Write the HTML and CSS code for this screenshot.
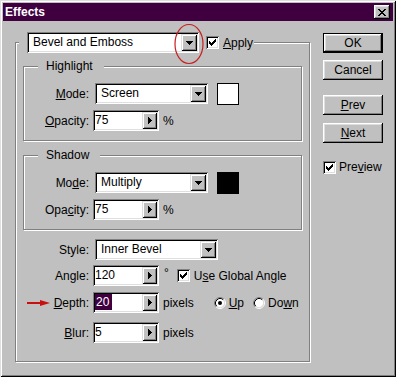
FILE: index.html
```html
<!DOCTYPE html>
<html lang="en">
<head>
    <meta charset="UTF-8">
    <title>Effects</title>
    <link rel="stylesheet" href="styles.css">
</head>
<body>
    <div class="window">
        <div class="titlebar">
            <span class="title">Effects</span>
            <span class="close-btn">
                <svg width="8" height="7" viewBox="0 0 8 7" shape-rendering="crispEdges"><path d="M0 0h2v1H0zM6 0h2v1H6zM1 1h2v1H1zM5 1h2v1H5zM2 2h4v1H2zM3 3h2v1H3zM2 4h4v1H2zM1 5h2v1H1zM5 5h2v1H5zM0 6h2v1H0zM6 6h2v1H6z"/></svg>
            </span>
        </div>

        <div class="dialog-body">
            <div class="main-group">
                <div class="main-header">
                    <div class="combo combo-effect">
                        <span class="combo-text">Bevel and Emboss</span>
                        <span class="combo-btn"><svg width="7" height="4" viewBox="0 0 7 4" shape-rendering="crispEdges"><path d="M0 0h7v1H0zM1 1h5v1H1zM2 2h3v1H2zM3 3h1v1H3z"/></svg></span>
                    </div>
                    <span class="checkbox check-apply"><svg width="7" height="7" viewBox="0 0 7 7" shape-rendering="crispEdges"><path d="M6 0h1v1H6zM5 1h2v1H5zM0 2h1v1H0zM4 2h3v1H4zM0 3h2v1H0zM3 3h3v1H3zM0 4h5v1H0zM1 5h3v1H1zM2 6h1v1H2z"/></svg></span>
                    <span class="check-text"><u>A</u>pply</span>
                </div>

                <div class="group group-highlight">
                    <div class="group-title">Highlight</div>
                    <div class="row row-first">
                        <span class="label"><u>M</u>ode:</span>
                        <div class="combo combo-mode">
                            <span class="combo-text">Screen</span>
                            <span class="combo-btn"><svg width="7" height="4" viewBox="0 0 7 4" shape-rendering="crispEdges"><path d="M0 0h7v1H0zM1 1h5v1H1zM2 2h3v1H2zM3 3h1v1H3z"/></svg></span>
                        </div>
                        <span class="swatch swatch-white"></span>
                    </div>
                    <div class="row row-next">
                        <span class="label"><u>O</u>pacity:</span>
                        <div class="spin">
                            <span class="spin-field">75</span>
                            <span class="spin-btn"><svg width="4" height="7" viewBox="0 0 4 7" shape-rendering="crispEdges"><path d="M0 0h1v7H0zM1 1h1v5H1zM2 2h1v3H2zM3 3h1v1H3z"/></svg></span>
                        </div>
                        <span class="unit">%</span>
                    </div>
                </div>

                <div class="group group-shadow">
                    <div class="group-title">Shadow</div>
                    <div class="row row-first">
                        <span class="label">Mo<u>d</u>e:</span>
                        <div class="combo combo-mode">
                            <span class="combo-text">Multiply</span>
                            <span class="combo-btn"><svg width="7" height="4" viewBox="0 0 7 4" shape-rendering="crispEdges"><path d="M0 0h7v1H0zM1 1h5v1H1zM2 2h3v1H2zM3 3h1v1H3z"/></svg></span>
                        </div>
                        <span class="swatch swatch-black"></span>
                    </div>
                    <div class="row row-next">
                        <span class="label">Opa<u>c</u>ity:</span>
                        <div class="spin">
                            <span class="spin-field">75</span>
                            <span class="spin-btn"><svg width="4" height="7" viewBox="0 0 4 7" shape-rendering="crispEdges"><path d="M0 0h1v7H0zM1 1h1v5H1zM2 2h1v3H2zM3 3h1v1H3z"/></svg></span>
                        </div>
                        <span class="unit">%</span>
                    </div>
                </div>

                <div class="lower-rows">
                    <div class="row row-style">
                        <span class="label">Style:</span>
                        <div class="combo combo-style">
                            <span class="combo-text">Inner Bevel</span>
                            <span class="combo-btn"><svg width="7" height="4" viewBox="0 0 7 4" shape-rendering="crispEdges"><path d="M0 0h7v1H0zM1 1h5v1H1zM2 2h3v1H2zM3 3h1v1H3z"/></svg></span>
                        </div>
                    </div>
                    <div class="row row-angle">
                        <span class="label">Angle:</span>
                        <div class="spin">
                            <span class="spin-field">120</span>
                            <span class="spin-btn"><svg width="4" height="7" viewBox="0 0 4 7" shape-rendering="crispEdges"><path d="M0 0h1v7H0zM1 1h1v5H1zM2 2h1v3H2zM3 3h1v1H3z"/></svg></span>
                        </div>
                        <span class="degree">°</span>
                        <span class="checkbox check-global"><svg width="7" height="7" viewBox="0 0 7 7" shape-rendering="crispEdges"><path d="M6 0h1v1H6zM5 1h2v1H5zM0 2h1v1H0zM4 2h3v1H4zM0 3h2v1H0zM3 3h3v1H3zM0 4h5v1H0zM1 5h3v1H1zM2 6h1v1H2z"/></svg></span>
                        <span class="check-text">U<u>s</u>e Global Angle</span>
                    </div>
                    <div class="row row-depth">
                        <span class="label"><u>D</u>epth:</span>
                        <div class="spin">
                            <span class="spin-field"><span class="selected">20</span></span>
                            <span class="spin-btn"><svg width="4" height="7" viewBox="0 0 4 7" shape-rendering="crispEdges"><path d="M0 0h1v7H0zM1 1h1v5H1zM2 2h1v3H2zM3 3h1v1H3z"/></svg></span>
                        </div>
                        <span class="unit">pixels</span>
                        <svg class="radio radio-up" width="12" height="12" viewBox="0 0 12 12">
                            <circle cx="6" cy="6" r="4.5" fill="#fff"/>
                            <path d="M2.11 9.89A5.5 5.5 0 0 1 9.89 2.11" fill="none" stroke="#808080"/>
                            <path d="M9.89 2.11A5.5 5.5 0 0 1 2.11 9.89" fill="none" stroke="#fff"/>
                            <path d="M2.82 9.18A4.5 4.5 0 0 1 9.18 2.82" fill="none" stroke="#000"/>
                            <path d="M9.18 2.82A4.5 4.5 0 0 1 2.82 9.18" fill="none" stroke="#dfdfdf"/>
                            <circle cx="6" cy="6" r="2"/>
                        </svg>
                        <span class="radio-text"><u>U</u>p</span>
                        <svg class="radio radio-down" width="12" height="12" viewBox="0 0 12 12">
                            <circle cx="6" cy="6" r="4.5" fill="#fff"/>
                            <path d="M2.11 9.89A5.5 5.5 0 0 1 9.89 2.11" fill="none" stroke="#808080"/>
                            <path d="M9.89 2.11A5.5 5.5 0 0 1 2.11 9.89" fill="none" stroke="#fff"/>
                            <path d="M2.82 9.18A4.5 4.5 0 0 1 9.18 2.82" fill="none" stroke="#000"/>
                            <path d="M9.18 2.82A4.5 4.5 0 0 1 2.82 9.18" fill="none" stroke="#dfdfdf"/>
                        </svg>
                        <span class="radio-text">Do<u>w</u>n</span>
                    </div>
                    <div class="row row-blur">
                        <span class="label"><u>B</u>lur:</span>
                        <div class="spin">
                            <span class="spin-field">5</span>
                            <span class="spin-btn"><svg width="4" height="7" viewBox="0 0 4 7" shape-rendering="crispEdges"><path d="M0 0h1v7H0zM1 1h1v5H1zM2 2h1v3H2zM3 3h1v1H3z"/></svg></span>
                        </div>
                        <span class="unit">pixels</span>
                    </div>
                </div>
            </div>

            <div class="side">
                <button class="btn btn-default">OK</button>
                <button class="btn btn-cancel">Cancel</button>
                <button class="btn btn-prev"><u>P</u>rev</button>
                <button class="btn btn-next"><u>N</u>ext</button>
                <div class="preview">
                    <span class="checkbox"><svg width="7" height="7" viewBox="0 0 7 7" shape-rendering="crispEdges"><path d="M6 0h1v1H6zM5 1h2v1H5zM0 2h1v1H0zM4 2h3v1H4zM0 3h2v1H0zM3 3h3v1H3zM0 4h5v1H0zM1 5h3v1H1zM2 6h1v1H2z"/></svg></span>
                    <span class="check-text">Pre<u>v</u>iew</span>
                </div>
            </div>
        </div>

        <!-- red marks drawn over the dialog -->
        <svg class="mark-circle" width="34" height="44" viewBox="0 0 34 44">
            <ellipse cx="17" cy="22" rx="14" ry="19.5" fill="none" stroke="#c81e1e" stroke-width="1.2"/>
        </svg>
        <svg class="mark-arrow" width="26" height="10" viewBox="0 0 26 10">
            <rect x="1" y="4" width="15" height="2" fill="#c81010"/>
            <polygon points="14,2 24,5 14,8" fill="#c81010"/>
        </svg>
    </div>
</body>
</html>
```

FILE: styles.css
```css
*{
    box-sizing: border-box;
}
body{
    margin: 0;
    background: #c0c0c0;
    font-family: "Liberation Sans", Arial, sans-serif;
    font-size: 12px;
    color: #000;
}
.window{
    position: relative;
    width: 396px;
    height: 377px;
    padding: 3px;
    background: #c0c0c0;
    box-shadow: inset 1px 1px #dfdfdf, inset -1px -1px #000, inset 2px 2px #fff, inset -2px -2px #808080;
}
.titlebar{
    height: 18px;
    background: #400040;
    display: flex;
    align-items: center;
    justify-content: space-between;
    padding-left: 2px;
}
.title{
    color: #fff;
    font-weight: bold;
    font-size: 12px;
}
.close-btn{
    width: 16px;
    height: 14px;
    margin-right: 3px;
    display: flex;
    align-items: center;
    justify-content: center;
    background: #c0c0c0;
    box-shadow: inset -1px -1px #000, inset 1px 1px #fff, inset -2px -2px #808080, inset 2px 2px #dfdfdf;
}

.dialog-body{
    display: flex;
    align-items: flex-start;
}
.main-group{
    width: 295px;
    margin: 21px 0 0 12px;
    border: 1px solid #808080;
    box-shadow: 1px 1px 0 #fff, inset 1px 1px 0 #fff;
    padding-bottom: 18px;
}
.main-header{
    display: flex;
    align-items: center;
    width: max-content;
    height: 21px;
    margin: -11px 0 0 3px;
    padding: 0 1px 0 8px;
    background: #c0c0c0;
}
.group{
    width: 279px;
    margin-left: 7px;
    border: 1px solid #808080;
    box-shadow: 1px 1px 0 #fff, inset 1px 1px 0 #fff;
    padding-bottom: 9px;
}
.group-highlight{
    margin-top: 13px;
}
.group-shadow{
    margin-top: 14px;
}
.group-title{
    width: max-content;
    margin: -8px 0 0 14px;
    padding: 0 11px 0 8px;
    line-height: 14px;
    background: #c0c0c0;
}

.row{
    display: flex;
    align-items: center;
    height: 21px;
}
.row-first{ margin-top: 10px; }
.row-next{ margin-top: 6px; }
.label{
    width: 65px;
    margin-right: 4px;
    text-align: right;
}
.lower-rows{
    margin: 9px 0 0 8px;
}
.row-angle{ margin-top: 5px; }
.row-depth{ margin-top: 6px; }
.row-blur{ margin-top: 9px; }

/* sunken controls */
.combo, .spin{
    display: flex;
    height: 21px;
    padding: 2px;
    background: #fff;
    box-shadow: inset 1px 1px #808080, inset -1px -1px #fff, inset 2px 2px #000, inset -2px -2px #dfdfdf;
}
.combo{
    margin-left: 2px;
}
.combo-effect{
    width: 172px;
    margin-left: 0;
}
.combo-mode{ width: 113px; }
.combo-style{ width: 123px; }
.combo-text{
    flex: 1;
    padding-left: 4px;
    line-height: 17px;
}
.combo-btn, .spin-btn{
    display: flex;
    align-items: center;
    justify-content: center;
    background: #c0c0c0;
    box-shadow: inset 1px 1px #dfdfdf, inset -1px -1px #000, inset 2px 2px #fff, inset -2px -2px #808080;
}
.combo-btn{ width: 16px; }
.spin{ width: 66px; }
.spin-field{
    flex: 1;
    line-height: 17px;
}
.spin-btn{ width: 15px; }
.selected{
    display: inline-block;
    padding: 0 3px 0 1px;
    line-height: 16px;
    background: #400040;
    color: #fff;
}
.unit{ margin-left: 4px; }
.degree{
    margin-left: 5px;
    align-self: flex-start;
    margin-top: 1px;
}

.swatch{
    width: 22px;
    height: 22px;
    margin-left: 9px;
    border: 1px solid #000;
}
.swatch-white{ background: #fff; }
.swatch-black{ background: #000; }

.checkbox{
    display: flex;
    align-items: center;
    justify-content: center;
    width: 13px;
    height: 13px;
    background: #fff;
    box-shadow: inset 1px 1px #808080, inset -1px -1px #fff, inset 2px 2px #000, inset -2px -2px #dfdfdf;
}
.check-apply{ margin-left: 7px; }
.check-global{ margin-left: 8px; }
.check-text{ margin-left: 4px; }
.radio-up{ margin-left: 20px; }
.radio-down{ margin-left: 9px; }
.radio-text{ margin-left: 3px; }

/* buttons on the right */
.side{
    width: 60px;
    margin: 12px 0 0 13px;
    display: flex;
    flex-direction: column;
}
.btn{
    height: 20px;
    padding: 0;
    border: none;
    background: #c0c0c0;
    font: inherit;
    color: #000;
    box-shadow: inset -1px -1px #000, inset 1px 1px #fff, inset -2px -2px #808080, inset 2px 2px #dfdfdf;
}
.btn-default{
    border: 1px solid #000;
}
.btn-cancel{ margin-top: 7px; }
.btn-prev{ margin-top: 15px; }
.btn-next{ margin-top: 8px; }
.preview{
    display: flex;
    align-items: center;
    margin-top: 17px;
}
.preview .check-text{ margin-left: 3px; }

.mark-circle{
    position: absolute;
    left: 172px;
    top: 22px;
}
.mark-arrow{
    position: absolute;
    left: 26px;
    top: 298px;
}
```
